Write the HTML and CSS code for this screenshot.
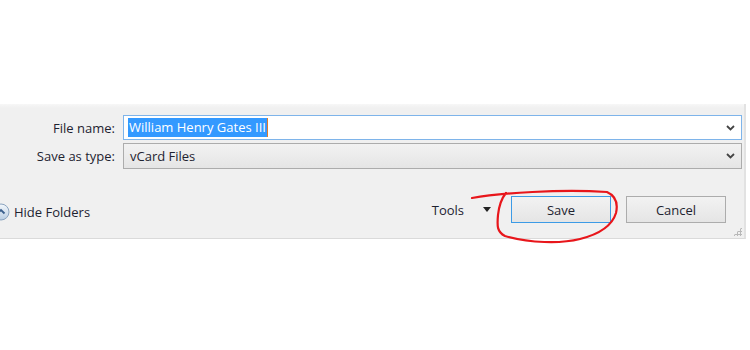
FILE: index.html
```html
<!DOCTYPE html>
<html lang="en">
<head>
    <meta charset="UTF-8">
    <title>Save As</title>
    <link rel="stylesheet" href="styles.css">
</head>
<body>

<div class="dialog">
    <div class="fields">
        <div class="row">
            <label class="label">File name:</label>
            <div class="control control-input">
                <span class="selected">William Henry Gates III</span>
                <svg class="chevron" width="9" height="6" viewBox="0 0 9 6"><path d="M1 1 L4.5 4.5 L8 1" fill="none" stroke="#444" stroke-width="1.8"/></svg>
            </div>
        </div>
        <div class="row">
            <label class="label">Save as type:</label>
            <div class="control control-select">
                <span>vCard Files</span>
                <svg class="chevron" width="9" height="6" viewBox="0 0 9 6"><path d="M1 1 L4.5 4.5 L8 1" fill="none" stroke="#444" stroke-width="1.8"/></svg>
            </div>
        </div>
    </div>

    <div class="footer">
        <div class="hide-folders">
            <svg class="folder-icon" width="18" height="18" viewBox="0 0 18 18">
                <defs>
                    <linearGradient id="ball" x1="0" y1="0" x2="0" y2="1">
                        <stop offset="0" stop-color="#f4f8fc"/>
                        <stop offset="1" stop-color="#b9cde2"/>
                    </linearGradient>
                </defs>
                <circle cx="9" cy="9" r="8" fill="url(#ball)" stroke="#8aa3bf"/>
                <path d="M5.5 10.5 L9 7 L12.5 10.5" fill="none" stroke="#3a5f8c" stroke-width="1.8"/>
            </svg>
            <span>Hide Folders</span>
        </div>
        <div class="actions">
            <span class="tools">Tools</span>
            <span class="tools-arrow"></span>
            <button class="btn btn-default">Save</button>
            <button class="btn">Cancel</button>
        </div>
        <span class="grip"></span>
    </div>
</div>

<!-- hand drawn annotation on top of the dialog -->
<svg class="scribble" width="750" height="350" viewBox="0 0 750 350">
    <path d="M472 198 C500 193 560 189 607 192 C616 196 618 204 616 213 C612 226 600 234 580 239 C560 244 530 243 505 236 C497 232 497 226 498 215 C499 206 501 199 506 193"
          fill="none" stroke="#e8161b" stroke-width="2.2" stroke-linecap="round" stroke-linejoin="round"/>
</svg>

</body>
</html>
```

FILE: styles.css
```css
* {
    box-sizing: border-box;
}
body {
    margin: 0;
    background: #fff;
    font-family: "Open Sans", "Noto Sans", Arial, sans-serif;
    font-size: 13px;
    color: #1e2330;
    width: 750px;
    height: 350px;
    overflow: hidden;
    position: relative;
}
.dialog {
    margin-top: 104px;
    width: 746px;
    height: 135px;
    background: linear-gradient(#f7f7f7 0, #f0f0f0 4px);
    border-bottom: 1px solid #dadada;
    border-right: 2px solid #e2e2e2;
    display: flex;
    flex-direction: column;
}
.fields {
    padding-top: 11px;
    display: flex;
    flex-direction: column;
    gap: 3px;
}
.row {
    display: flex;
    align-items: center;
    gap: 8px;
}
.label {
    width: 115px;
    text-align: right;
}
.control {
    width: 619px;
    height: 25px;
    display: flex;
    align-items: center;
    justify-content: space-between;
    padding: 0 5px 0 4px;
}
.control-input {
    background: #fff;
    border: 1px solid #7eb4ea;
}
.control-select {
    height: 26px;
    background: linear-gradient(#f2f2f2, #e5e5e5);
    border: 1px solid #acacac;
    padding-left: 6px;
}
.selected {
    background: #3399ff;
    color: #fff;
    line-height: 19px;
    padding: 0 1px;
    border-right: 1px solid #e07a2a;
}
.chevron {
    margin-right: 1px;
}
.footer {
    flex: 1;
    display: flex;
    align-items: center;
    justify-content: space-between;
    position: relative;
    padding-top: 12px;
}
.hide-folders {
    display: flex;
    align-items: center;
    gap: 4px;
    margin-left: -8px;
    padding-top: 4px;
}
.actions {
    display: flex;
    align-items: center;
    margin-right: 18px;
}
.tools {
    margin-right: 19px;
}
.tools-arrow {
    width: 0;
    height: 0;
    border-left: 4px solid transparent;
    border-right: 4px solid transparent;
    border-top: 5px solid #222;
    margin-right: 20px;
}
.btn {
    width: 100px;
    height: 27px;
    font-family: inherit;
    font-size: inherit;
    color: #1e2330;
    background: linear-gradient(#f2f2f2, #e5e5e5);
    border: 1px solid #acacac;
    margin-left: 15px;
    padding: 0;
}
.btn-default {
    border-color: #3c9be6;
    margin-left: 0;
}
.grip {
    position: absolute;
    right: 2px;
    bottom: 2px;
    width: 9px;
    height: 9px;
    background-image: radial-gradient(circle, #b8b8b8 1px, transparent 1.2px);
    background-size: 3px 3px;
    clip-path: polygon(100% 0, 100% 100%, 0 100%);
}
.scribble {
    position: absolute;
    top: 0;
    left: 0;
    pointer-events: none;
}
```
